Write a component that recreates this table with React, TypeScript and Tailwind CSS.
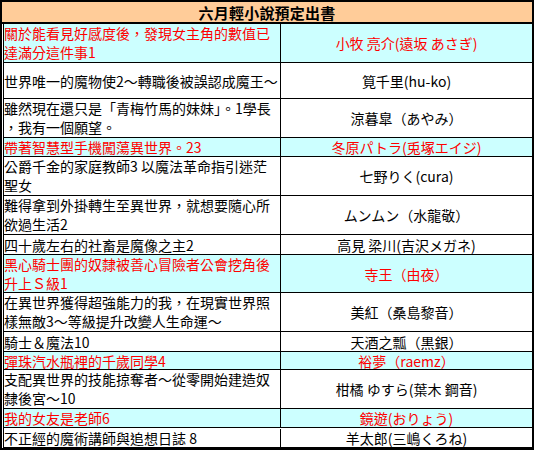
const books = [
  { lines: ['關於能看見好感度後，發現女主角的數值已', '達滿分這件事1'], author: '小牧 亮介(遠坂 あさぎ)', hot: true, h: 'h-[39px]' },
  { lines: ['世界唯一的魔物使2～轉職後被誤認成魔王～'], author: '筧千里(hu-ko)', hot: false, h: 'h-[36px]' },
  { lines: ['雖然現在還只是「青梅竹馬的妹妹」。1學長', '，我有一個願望。'], author: '涼暮皐（あやみ）', hot: false, h: 'h-[39px]' },
  { lines: ['帶著智慧型手機闖蕩異世界。23'], author: '冬原パトラ(兎塚エイジ)', hot: true, h: 'h-[19px]' },
  { lines: ['公爵千金的家庭教師3 以魔法革命指引迷茫', '聖女'], author: '七野りく(cura)', hot: false, h: 'h-[39px]' },
  { lines: ['難得拿到外掛轉生至異世界，就想要隨心所', '欲過生活2'], author: 'ムンムン（水龍敬）', hot: false, h: 'h-[39px]' },
  { lines: ['四十歲左右的社畜是魔像之主2'], author: '高見 梁川(吉沢メガネ)', hot: false, h: 'h-[20px]' },
  { lines: ['黑心騎士團的奴隸被善心冒險者公會挖角後', '升上Ｓ級1'], author: '寺王（由夜）', hot: true, h: 'h-[38px]' },
  { lines: ['在異世界獲得超強能力的我，在現實世界照', '樣無敵3～等級提升改變人生命運～'], author: '美紅（桑島黎音）', hot: false, h: 'h-[39px]' },
  { lines: ['騎士＆魔法10'], author: '天酒之瓢（黒銀）', hot: false, h: 'h-[20px]' },
  { lines: ['彈珠汽水瓶裡的千歲同學4'], author: '裕夢（raemz）', hot: true, h: 'h-[18px]' },
  { lines: ['支配異世界的技能掠奪者～從零開始建造奴', '隸後宮～10'], author: '柑橘 ゆすら(葉木 鋼音)', hot: false, h: 'h-[39px]' },
  { lines: ['我的女友是老師6'], author: '鏡遊(おりょう)', hot: true, h: 'h-[19px]' },
  { lines: ['不正經的魔術講師與追想日誌 8'], author: '羊太郎(三嶋くろね)', hot: false, h: 'h-[20px] pt-px' },
];

export default function App() {
  return (
    <div
      className="w-[534px] h-[450px] border-2 border-black bg-white overflow-hidden text-[14px] text-black"
      style={{ fontFamily: '"Noto Sans CJK TC", "Noto Sans CJK JP", sans-serif' }}
    >
      <div className="h-[22px] bg-[#ffcc99] border-b-2 border-black flex items-center justify-center">
        <span className="text-[15px] font-bold leading-none tracking-[0.2px]">六月輕小說預定出書</span>
      </div>
      <div className="ml-px border-l border-black">
        {books.map((book, index) => (
          <div
            key={index}
            className={`${book.h} grid grid-cols-[277px_1fr] border-b border-black ${
              book.hot ? 'bg-[#ccffff] text-[#ff0000]' : ''
            }`}
          >
            <div
              className={`border-r border-black flex flex-col justify-center ${
                book.lines.length > 1 ? 'leading-[19px]' : 'leading-[16px]'
              }`}
            >
              {book.lines.map((line, i) => (
                <div key={i} className="whitespace-pre">{line}</div>
              ))}
            </div>
            <div className="flex items-center justify-center leading-[16px] whitespace-pre">
              {book.author}
            </div>
          </div>
        ))}
      </div>
    </div>
  );
}
